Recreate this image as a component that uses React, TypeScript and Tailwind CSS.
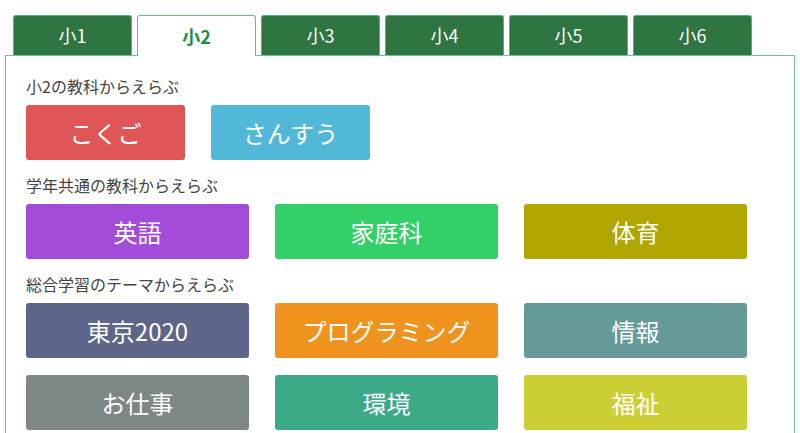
import React from 'react'

const grades = ['小1', '小2', '小3', '小4', '小5', '小6']

type Subject = { label: string; color: string }

const sections: { title: string; wide: boolean; rows: Subject[][] }[] = [
    {
        title: '小2の教科からえらぶ',
        wide: false,
        rows: [
            [
                { label: 'こくご', color: 'bg-[#e05656]' },
                { label: 'さんすう', color: 'bg-[#52b8d8]' },
            ],
        ],
    },
    {
        title: '学年共通の教科からえらぶ',
        wide: true,
        rows: [
            [
                { label: '英語', color: 'bg-[#a34cd9]' },
                { label: '家庭科', color: 'bg-[#33cf68]' },
                { label: '体育', color: 'bg-[#b1a500]' },
            ],
        ],
    },
    {
        title: '総合学習のテーマからえらぶ',
        wide: true,
        rows: [
            [
                { label: '東京2020', color: 'bg-[#5d6689]' },
                { label: 'プログラミング', color: 'bg-[#f0931e]' },
                { label: '情報', color: 'bg-[#659a99]' },
            ],
            [
                { label: 'お仕事', color: 'bg-[#7d8786]' },
                { label: '環境', color: 'bg-[#3caa89]' },
                { label: '福祉', color: 'bg-[#cccf33]' },
            ],
        ],
    },
]

export default function App() {
    const active = 1

    return (
        <div
            className="h-[433px] w-[800px] overflow-hidden bg-white"
            style={{ fontFamily: '"Noto Sans CJK JP", "Noto Sans", sans-serif' }}
        >
            {/* grade tabs */}
            <div className="flex gap-[5px] pl-[13px] pt-[15px]">
                {grades.map((g, i) =>
                    i === active ? (
                        <div
                            key={g}
                            className="relative z-10 -mb-px flex h-[41px] w-[119px] items-center justify-center rounded-t-[3px] border border-b-0 border-[#5cc088] bg-white text-[18px] font-bold text-[#1f8c45]"
                        >
                            {g}
                        </div>
                    ) : (
                        <div
                            key={g}
                            className="flex h-[40px] w-[119px] items-center justify-center rounded-t-[3px] border border-b-0 border-[#4fb47a] bg-[#2f7542] text-[18px] text-white"
                        >
                            {g}
                        </div>
                    )
                )}
            </div>

            {/* panel */}
            <div className="mx-[5px] h-[400px] border border-[#6cc591] px-[20px] pt-[19px]">
                {sections.map((s, si) => (
                    <div key={s.title} className={si > 0 ? 'mt-[14px]' : ''}>
                        <div className="mb-[8px] h-[22px] text-[16px] leading-[22px] text-[#444]">
                            {s.title}
                        </div>
                        <div className="flex flex-col gap-[17px]">
                            {s.rows.map((row, ri) => (
                                <div key={ri} className="flex gap-[26px]">
                                    {row.map((b) => (
                                        <button
                                            key={b.label}
                                            className={`flex h-[55px] items-center justify-center rounded-[3px] text-[24px] text-white ${b.color} ${
                                                s.wide ? 'w-[223px]' : 'w-[159px]'
                                            }`}
                                        >
                                            {b.label}
                                        </button>
                                    ))}
                                </div>
                            ))}
                        </div>
                    </div>
                ))}
            </div>
        </div>
    )
}
